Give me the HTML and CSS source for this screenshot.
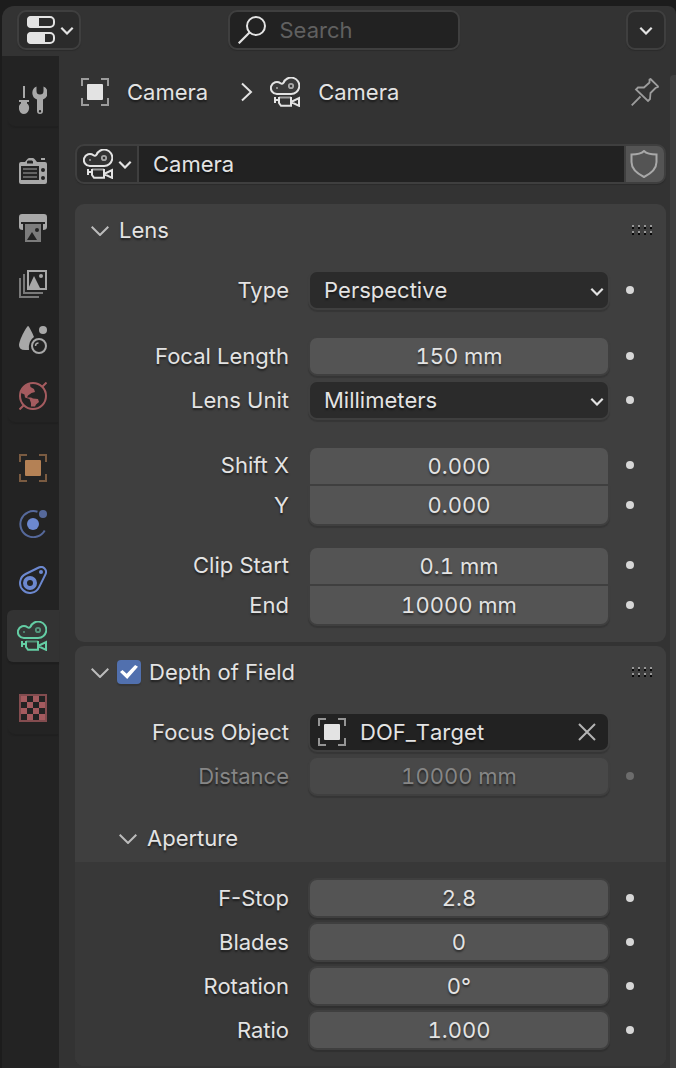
FILE: index.html
```
<!DOCTYPE html>
<html lang="en">
<head>
<meta charset="utf-8">
<title>Properties</title>
<link rel="stylesheet" href="styles.css">
</head>
<body>
<svg class="sprite" aria-hidden="true">
  <symbol id="camera" viewBox="0 0 30 30">
    <path d="M7 17A6 6 0 1 1 10.500 6.200C11.500 7 12.700 7 13.500 5.800A8.200 8.200 0 1 1 21 17Z" fill="currentColor" fill-opacity=".04" stroke="currentColor" stroke-width="2"/>
    <circle cx="21" cy="9" r="2.200" fill="none" stroke="currentColor" stroke-width="1.800" opacity=".65"/>
    <circle cx="7" cy="11" r="1" fill="currentColor" opacity=".65"/>
    <path d="M9 20.500H21" stroke="currentColor" stroke-width="2" opacity=".6"/>
    <path d="M5 20V26M5 23H8M9 20V26L11 28.800H21V20M21 25L29 21V28.800L21 25" fill="none" stroke="currentColor" stroke-width="2"/>
  </symbol>
  <symbol id="object" viewBox="0 0 28 28">
    <path d="M1 8V1H8M20 1H27V8M27 20V27H20M8 27H1V20" fill="none" stroke="currentColor" stroke-width="2" opacity=".6"/>
    <rect x="6" y="6" width="16" height="16" rx="1" fill="currentColor"/>
  </symbol>
  <symbol id="chevron" viewBox="0 0 14 10">
    <path d="M1.300 2.800L7 8.500L12.700 2.800" fill="none" stroke="currentColor" stroke-width="2.200"/>
  </symbol>
  <symbol id="disclosure" viewBox="0 0 18 12">
    <path d="M.7 2.700L9 11L17.300 2.700" fill="none" stroke="currentColor" stroke-width="2"/>
  </symbol>
  <symbol id="grip" viewBox="0 0 20 10">
    <path d="M0 1H20M0 7H20" stroke="#989898" stroke-width="2" stroke-dasharray="2 4"/>
    <path d="M0 3H20M0 9H20" stroke="#080808" stroke-width="2" stroke-dasharray="2 4"/>
  </symbol>
</svg>

<div class="editor">
  <header class="header">
    <button class="btn editor-type" aria-label="Editor type">
      <svg class="icon" viewBox="0 0 28 28">
        <rect x="1" y="1" width="26" height="10" rx="4" fill="none" stroke="currentColor" stroke-width="2"/>
        <path d="M4 0H12V12H4A4 4 0 0 1 0 8V4A4 4 0 0 1 4 0Z" fill="currentColor"/>
        <rect x="1" y="17" width="26" height="10" rx="4" fill="none" stroke="currentColor" stroke-width="2"/>
        <path d="M4 16H18V28H4A4 4 0 0 1 0 24V20A4 4 0 0 1 4 16Z" fill="currentColor"/>
      </svg>
      <svg class="chev"><use href="#chevron"/></svg>
    </button>
    <label class="search">
      <svg class="icon" viewBox="0 0 28 28">
        <circle cx="18" cy="10" r="9" fill="none" stroke="currentColor" stroke-width="2"/>
        <path d="M11.500 16.500L.7 27.300" stroke="currentColor" stroke-width="2.200"/>
      </svg>
      <input class="search-input" type="text" placeholder="Search" aria-label="Search">
    </label>
    <button class="btn options" aria-label="Options"><svg class="chev"><use href="#chevron"/></svg></button>
  </header>

  <div class="body">
    <nav class="tabs" aria-label="Property tabs">
      <div class="tab-group">
        <button class="tab" aria-label="Tool">
          <svg class="icon" viewBox="0 0 28 28" fill="currentColor">
            <path d="M4 0H6V12H4ZM0 14H10V16H8V17.500C12 20 10 28 5 28S-2 20 2 17.500V16H0Z"/>
            <path fill-rule="evenodd" d="M17.500 .5A7 7 0 0 0 18 13.500V25A3 3 0 0 0 24 25V13.500A7 7 0 0 0 24.500 .5V5A3 3 0 0 1 17.500 5ZM21 24A1.200 1.200 0 0 1 21 26.400A1.200 1.200 0 0 1 21 24Z"/>
          </svg>
        </button>
      </div>
      <div class="tab-group">
        <button class="tab" aria-label="Render">
          <svg class="icon" viewBox="0 0 28 28">
            <path d="M2 4H6L8 1.500Q9 0 10 0H14Q15 0 16 1.500L18 4H26A2 2 0 0 1 28 6V24A2 2 0 0 1 26 26H2A2 2 0 0 1 0 24V6A2 2 0 0 1 2 4ZM22 0H26V2H22Z" fill="currentColor"/>
            <path d="M8 5.500V3.500L9 2.500H13L14 3.500V5.500ZM2 8H20V22H2Z" fill="#232323"/>
            <circle cx="24" cy="12" r="2" fill="#232323"/><circle cx="24" cy="20" r="2" fill="#232323"/>
            <path d="M4 11H18M4 15H18M4 19H18" stroke="#636363" stroke-width="2"/>
          </svg>
        </button>
        <button class="tab" aria-label="Output">
          <svg class="icon" viewBox="0 0 28 28">
            <path d="M3 0H25A3 3 0 0 1 28 3V13Q28 16 24 16V10H26V8H2V10H4V16Q0 16 0 13V3A3 3 0 0 1 3 0Z" fill="currentColor"/>
            <path d="M6 10H22V28H6Z" fill="#7c7c7c"/>
            <path d="M8 26L13 18L18 26Z" fill="#232323"/><circle cx="18" cy="16" r="2" fill="#232323"/>
          </svg>
        </button>
        <button class="tab" aria-label="View Layer">
          <svg class="icon" viewBox="0 0 28 28">
            <path d="M1 8V27H20M5 4V23H24" fill="none" stroke="currentColor" stroke-width="2" opacity=".65"/>
            <rect x="9" y="1" width="18" height="18" fill="none" stroke="currentColor" stroke-width="2"/>
            <path d="M9 19L15 6L21.500 19Z" fill="currentColor"/><circle cx="22" cy="6" r="2" fill="currentColor"/>
          </svg>
        </button>
        <button class="tab" aria-label="Scene">
          <svg class="icon" viewBox="0 0 28 28">
            <path d="M9 0C10 0 14 8 15 11Q9 15 10 24H6Q0 24 0 19C1 12 8 0 9 0Z" fill="currentColor"/>
            <circle cx="24" cy="4" r="4" fill="currentColor"/>
            <circle cx="20" cy="20" r="7" fill="none" stroke="currentColor" stroke-width="2"/>
            <path d="M16.500 20Q16.500 17 19.500 17" fill="none" stroke="currentColor" stroke-width="1.500"/>
          </svg>
        </button>
        <button class="tab red" aria-label="World">
          <svg class="icon" viewBox="0 0 28 28">
            <circle cx="14" cy="14" r="13" fill="none" stroke="currentColor" stroke-width="2"/>
            <path d="M.5 27.500L5 23M23 5L27.500 .5" stroke="currentColor" stroke-width="2"/>
            <path d="M2 11C3 6 6 2.500 11 2L11.500 5L15 7L16 10L12.500 11L9 13.500L8 15.500H12L14 16.500L19 17L20 20L17 22.500L16 24.500H12V21L10.500 17L6 15.500L5.500 12.500Z" fill="currentColor"/>
          </svg>
        </button>
      </div>
      <div class="tab-group">
        <button class="tab orange" aria-label="Object"><svg class="icon"><use href="#object"/></svg></button>
        <button class="tab blue" aria-label="Physics">
          <svg class="icon" viewBox="0 0 28 28">
            <path d="M18.500 1.800A13 13 0 1 0 25.700 20.500" fill="none" stroke="currentColor" stroke-width="2" opacity=".7"/>
            <circle cx="24" cy="4" r="4" fill="currentColor" opacity=".7"/>
            <circle cx="14" cy="14" r="6" fill="currentColor"/>
          </svg>
        </button>
        <button class="tab blue" aria-label="Constraints">
          <svg class="icon" viewBox="0 0 28 28" fill="none" stroke="currentColor">
            <path d="M6.600 8L19.800 1.500A5 5 0 0 1 26.500 8.200L20 21.400A10 10 0 1 1 6.600 8Z" stroke-width="2"/>
            <circle cx="11" cy="17" r="5" stroke-width="4"/>
            <circle cx="22" cy="6" r="2" fill="currentColor" stroke="none"/>
          </svg>
        </button>
        <button class="tab green active" aria-label="Data" aria-current="page"><svg class="icon-lg"><use href="#camera"/></svg></button>
      </div>
      <div class="tab-group">
        <button class="tab red" aria-label="Texture">
          <svg class="icon" viewBox="0 0 28 28">
            <rect x="1" y="1" width="26" height="26" fill="none" stroke="currentColor" stroke-width="2" opacity=".75"/>
            <path d="M2 2h6v6h-6zM14 2h6v6h-6zM8 8h6v6h-6zM20 8h6v6h-6zM2 14h6v6h-6zM14 14h6v6h-6zM8 20h6v6h-6zM20 20h6v6h-6z" fill="currentColor"/>
          </svg>
        </button>
      </div>
    </nav>

    <main class="content">
      <div class="crumbs">
        <svg class="icon"><use href="#object"/></svg>
        <span class="crumb">Camera</span>
        <svg class="crumb-arrow" viewBox="0 0 12 20"><path d="M1 1.500L10 10L1 18.500" fill="none" stroke="currentColor" stroke-width="2"/></svg>
        <svg class="icon-lg"><use href="#camera"/></svg>
        <span class="crumb">Camera</span>
        <button class="plain pin" aria-label="Pin">
          <svg class="icon" viewBox="0 0 28 28" fill="none" stroke="currentColor" stroke-width="1.800">
            <path d="M.7 27.300L9.500 18.500M19.500 1L27 8.300V9L24.500 10L19.500 15L19 21L17 23L5 11.500L7 9.500L13 9.500L18.500 4.500L18.500 1.500Z"/>
          </svg>
        </button>
      </div>

      <div class="datablock">
        <button class="db-browse" aria-label="Browse camera data">
          <svg class="icon-lg"><use href="#camera"/></svg>
          <svg class="chev"><use href="#chevron"/></svg>
        </button>
        <input class="db-name" type="text" value="Camera" aria-label="Data name">
        <button class="db-shield" aria-label="Fake user">
          <svg class="icon" viewBox="0 0 28 28"><path d="M14 1C11 4 6 4.500 1.500 4.500V12C1.500 20 8 24 14 27C20 24 26.500 20 26.500 12V4.500C22 4.500 17 4 14 1Z" fill="none" stroke="currentColor" stroke-width="2"/></svg>
        </button>
      </div>

      <section class="panel">
        <h2 class="panel-head">
          <button class="plain toggle"><svg class="disc"><use href="#disclosure"/></svg>Lens</button>
          <svg class="grip"><use href="#grip"/></svg>
        </h2>
        <div class="rows">
          <div class="row">
            <label class="label" for="type">Type</label>
            <div class="drop"><select class="field select" id="type"><option>Perspective</option></select><svg class="chev"><use href="#chevron"/></svg></div>
            <button class="plain dot" aria-label="Animate type"></button>
          </div>
          <div class="row spaced">
            <label class="label" for="focal">Focal Length</label>
            <input class="field" id="focal" type="text" value="150 mm">
            <button class="plain dot" aria-label="Animate focal length"></button>
          </div>
          <div class="row">
            <label class="label" for="unit">Lens Unit</label>
            <div class="drop"><select class="field select" id="unit"><option>Millimeters</option></select><svg class="chev"><use href="#chevron"/></svg></div>
            <button class="plain dot" aria-label="Animate lens unit"></button>
          </div>
          <div class="pair spaced">
            <div class="row">
              <label class="label" for="sx">Shift X</label>
              <input class="field first" id="sx" type="text" value="0.000">
              <button class="plain dot" aria-label="Animate shift X"></button>
            </div>
            <div class="row">
              <label class="label" for="sy">Y</label>
              <input class="field last" id="sy" type="text" value="0.000">
              <button class="plain dot" aria-label="Animate shift Y"></button>
            </div>
          </div>
          <div class="pair">
            <div class="row">
              <label class="label" for="cs">Clip Start</label>
              <input class="field first" id="cs" type="text" value="0.1 mm">
              <button class="plain dot" aria-label="Animate clip start"></button>
            </div>
            <div class="row">
              <label class="label" for="ce">End</label>
              <input class="field last" id="ce" type="text" value="10000 mm">
              <button class="plain dot" aria-label="Animate clip end"></button>
            </div>
          </div>
        </div>
      </section>

      <section class="panel">
        <h2 class="panel-head">
          <button class="plain toggle" aria-label="Collapse Depth of Field"><svg class="disc"><use href="#disclosure"/></svg></button>
          <input class="check" type="checkbox" id="dof" checked>
          <label for="dof">Depth of Field</label>
          <svg class="grip"><use href="#grip"/></svg>
        </h2>
        <div class="rows short">
          <div class="row">
            <label class="label" for="focus">Focus Object</label>
            <div class="field picker">
              <svg class="icon"><use href="#object"/></svg>
              <input class="picker-input" id="focus" type="text" value="DOF_Target">
              <button class="plain clear" aria-label="Clear"><svg class="cross" viewBox="0 0 18 18"><path d="M1 1L17 17M17 1L1 17" stroke="currentColor" stroke-width="2"/></svg></button>
            </div>
          </div>
          <div class="row off">
            <label class="label" for="dist">Distance</label>
            <input class="field" id="dist" type="text" value="10000 mm" disabled>
            <button class="plain dot" aria-label="Animate distance" disabled></button>
          </div>
        </div>
        <h3 class="sub-head"><button class="plain toggle"><svg class="disc"><use href="#disclosure"/></svg>Aperture</button></h3>
        <div class="rows sub">
          <div class="row">
            <label class="label" for="fstop">F-Stop</label>
            <input class="field" id="fstop" type="text" value="2.8">
            <button class="plain dot" aria-label="Animate f-stop"></button>
          </div>
          <div class="row">
            <label class="label" for="blades">Blades</label>
            <input class="field" id="blades" type="text" value="0">
            <button class="plain dot" aria-label="Animate blades"></button>
          </div>
          <div class="row">
            <label class="label" for="rot">Rotation</label>
            <input class="field" id="rot" type="text" value="0°">
            <button class="plain dot" aria-label="Animate rotation"></button>
          </div>
          <div class="row">
            <label class="label" for="ratio">Ratio</label>
            <input class="field" id="ratio" type="text" value="1.000">
            <button class="plain dot" aria-label="Animate ratio"></button>
          </div>
        </div>
      </section>
    </main>
    <div class="scroll"></div>
  </div>
</div>
</body>
</html>
```
FILE: styles.css
```
* { box-sizing: border-box; }

body {
  margin: 0;
  min-height: 100vh;
  display: flex;
  background: #1c1c1c;
  color: #e3e3e3;
  font: 22px/28px Inter, "Noto Sans", sans-serif;
  text-shadow: 0 2px 2px rgba(0, 0, 0, .5);
}

button, input, select {
  margin: 0;
  min-width: 0;
  font: inherit;
  color: inherit;
  text-shadow: inherit;
}

svg { display: block; flex: none; }
.sprite { position: absolute; width: 0; height: 0; }
.icon { width: 28px; height: 28px; }
.icon-lg { width: 30px; height: 30px; }
.chev { width: 14px; height: 10px; }
.plain { border: 0; padding: 0; background: none; }

.editor {
  flex: 1;
  min-width: 0;
  display: flex;
  flex-direction: column;
  margin: 6px 0 0 2px;
  border-radius: 12px 8px 0 0;
  background: #333333;
  overflow: hidden;
}

/* Header */
.header {
  display: grid;
  grid-template-columns: 1fr 232px 1fr;
  align-items: center;
  height: 50px;
  padding: 0 10px 2px 15px;
}
.btn {
  display: flex;
  align-items: center;
  height: 40px;
  padding: 0;
  border: 2px solid #3f3f3f;
  border-radius: 9px;
  background: #2b2b2b;
  box-shadow: 0 1px 1px #2b2b2b;
}
.editor-type { width: 64px; gap: 5px; padding-left: 8px; }
.options { width: 40px; justify-content: center; justify-self: end; }
.search {
  display: flex;
  align-items: center;
  gap: 14px;
  height: 40px;
  margin: 0 -2px 0 2px;
  padding-left: 8px;
  border: 2px solid #3f3f3f;
  border-radius: 9px;
  background: #222222;
  box-shadow: 0 1px 1px #2b2b2b;
}
.search-input {
  flex: 1;
  padding: 0;
  border: 0;
  background: none;
  text-shadow: none;
}
.search-input::placeholder { color: #606060; opacity: 1; }

/* Tabs */
.body { flex: 1; display: flex; min-width: 0; }
.tabs {
  flex: none;
  display: flex;
  flex-direction: column;
  gap: 20px;
  width: 57px;
  padding: 18px 0 18px 5px;
  background: #232323;
}
.tab-group {
  display: flex;
  flex-direction: column;
  gap: 4px;
  border-radius: 8px 0 0 8px;
  box-shadow: 0 3px 1px -1px #202020;
}
.tab {
  display: flex;
  align-items: center;
  justify-content: center;
  height: 52px;
  padding: 0;
  border: 0;
  border-radius: 6px 0 0 6px;
  background: none;
  color: #a8a8a8;
}
.tab.active { padding-right: 2px; background: #333333; box-shadow: 0 2px 1px #1f1f1f; }
.tab.red { color: #a45b5f; }
.tab.orange { color: #b48155; }
.tab.blue { color: #6c88cf; }
.tab.green { color: #64cda4; }

/* Content */
.content {
  flex: 1;
  min-width: 0;
  display: flex;
  flex-direction: column;
  gap: 4px;
  padding: 18px 4px 2px 16px;
}
.crumbs {
  display: flex;
  align-items: center;
  height: 36px;
  padding: 0 7px 0 6px;
}
.crumb { margin-left: 18px; }
.crumb-arrow { width: 12px; height: 20px; margin: 0 17px 0 33px; }
.pin { margin-left: auto; color: #9c9c9c; }

.datablock {
  display: flex;
  gap: 2px;
  height: 40px;
  margin: 30px 0 16px;
  border: 2px solid #3f3f3f;
  border-radius: 9px;
  background: #3f3f3f;
  box-shadow: 0 1px 1px #2b2b2b;
  overflow: hidden;
}
.db-browse {
  display: flex;
  align-items: center;
  gap: 5px;
  width: 60px;
  padding: 0 0 0 6px;
  border: 0;
  background: #2b2b2b;
}
.db-name {
  flex: 1;
  padding: 0 14px;
  border: 0;
  background: #222222;
}
.db-shield {
  display: flex;
  align-items: center;
  justify-content: center;
  width: 38px;
  padding: 0 2px 0 0;
  border: 0;
  background: #545454;
  color: #a8a8a8;
}

/* Panels */
.panel { border-radius: 9px; background: #3f3f3f; overflow: hidden; }
.panel-head, .sub-head {
  display: flex;
  align-items: center;
  margin: 0;
  height: 52px;
  padding: 0 14px 0 16px;
  font: inherit;
}
.sub-head { height: 48px; padding-left: 44px; }
.toggle { display: flex; align-items: center; gap: 10px; }
.disc { width: 18px; height: 12px; color: #bcbcbc; }
.grip { width: 20px; height: 10px; margin-left: auto; }
.check {
  appearance: none;
  display: grid;
  place-items: center;
  width: 24px;
  height: 24px;
  margin: 0 8px;
  border-radius: 4px;
  background: #5170ae;
  box-shadow: 0 2px 1px #363636;
}
.check:checked::before {
  content: "";
  width: 18px;
  height: 14px;
  background: #ffffff;
  clip-path: polygon(0 50%, 14% 36%, 37% 62%, 84% 0, 100% 12%, 40% 100%);
}

.rows {
  display: flex;
  flex-direction: column;
  gap: 4px;
  padding: 14px 16px 16px;
}
.rows.short { padding-bottom: 18px; }
.rows.sub { padding-top: 16px; background: #383838; }
.row {
  display: grid;
  grid-template-columns: minmax(0, 217fr) minmax(0, 302fr) 40px;
  align-items: center;
}
.spaced { margin-top: 22px; }
.pair + .pair { margin-top: 16px; }
.label { padding-right: 19px; text-align: right; white-space: nowrap; }
.field {
  width: 100%;
  height: 40px;
  padding: 0;
  border: 2px solid #3f3f3f;
  border-radius: 9px;
  background: #545454;
  box-shadow: 0 2px 1px rgba(0, 0, 0, .15);
  text-align: center;
  font-kerning: none;
  font-variant-numeric: tabular-nums;
}
.field.first { height: 38px; border-bottom: 0; border-radius: 9px 9px 0 0; box-shadow: none; }
.field.last { height: 42px; border-radius: 0 0 9px 9px; }
.drop { position: relative; }
.drop .chev { position: absolute; right: 6px; top: 16px; pointer-events: none; }
.select {
  display: block;
  appearance: none;
  padding: 0 30px 0 14px;
  background: #2b2b2b;
  text-align: left;
}
.picker {
  display: flex;
  align-items: center;
  gap: 14px;
  padding: 0 12px 0 8px;
  background: #222222;
}
.picker-input { flex: 1; padding: 0; border: 0; background: none; font-kerning: none; }
.clear { color: #b4b4b4; }
.cross { width: 18px; height: 18px; }
.dot {
  justify-self: center;
  width: 8px;
  height: 8px;
  border-radius: 4px;
  background: #d6d6d6;
}
.off { color: #868686; }
.off .field { background: #484848; }
.off .dot { background: #6c6c6c; }

.scroll {
  flex: none;
  width: 6px;
  margin-top: 19px;
  border-radius: 4px 0 0 0;
  background: #404040;
}
```
